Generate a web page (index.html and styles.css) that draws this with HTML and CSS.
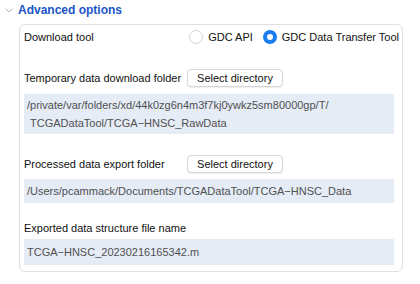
FILE: index.html
```html
<!DOCTYPE html>
<html lang="en">
<head>
    <meta charset="UTF-8" />
    <title>Advanced options</title>
    <link rel="stylesheet" href="styles.css">
</head>
<body>
    <div class="section-head">
        <svg class="chevron" width="8" height="5" viewBox="0 0 8 5">
            <path d="M0.5 0.5 L4 4 L7.5 0.5" fill="none" stroke="#b5b5b5" stroke-width="1" />
        </svg>
        <span class="section-title">Advanced options</span>
    </div>

    <div class="panel">
        <div class="row tool-row">
            <span>Download tool</span>
            <div class="radios">
                <label class="radio"><span class="dot"></span>GDC API</label>
                <label class="radio"><span class="dot checked"></span>GDC Data Transfer Tool</label>
            </div>
        </div>

        <div class="row first">
            <span class="label">Temporary data download folder</span>
            <button class="pick">Select directory</button>
        </div>
        <div class="path two-line">/private/var/folders/xd/44k0zg6n4m3f7kj0ywkz5sm80000gp/T/<br>&nbsp;TCGADataTool/TCGA&minus;HNSC_RawData</div>

        <div class="row">
            <span class="label">Processed data export folder</span>
            <button class="pick">Select directory</button>
        </div>
        <div class="path">/Users/pcammack/Documents/TCGADataTool/TCGA&minus;HNSC_Data</div>

        <div class="row short">
            <span>Exported data structure file name</span>
        </div>
        <div class="path tall">TCGA&minus;HNSC_20230216165342.m</div>
    </div>
</body>
</html>
```

FILE: styles.css
```css
body {
    margin: 0;
    font-family: 'Liberation Sans', Arial, sans-serif;
    font-size: 11px;
    color: #111;
    background: #fff;
}
.section-head {
    display: flex;
    align-items: center;
    height: 20px;
    padding-left: 5px;
    margin-bottom: 4px;
}
.chevron {
    margin-right: 5px;
}
.section-title {
    font-size: 12px;
    font-weight: bold;
    color: #1a56c8;
}
.panel {
    margin-left: 19px;
    width: 370px;
    border: 1px solid #e0e0e0;
    border-radius: 6px;
    padding: 1px 8px 6px 4px;
}
.row {
    display: flex;
    align-items: center;
    height: 20px;
    margin-top: 20px;
}
.row.first {
    margin-top: 20px;
}
.row.short {
    margin-top: 17px;
    height: 16px;
}
.tool-row {
    justify-content: space-between;
    height: 22px;
    margin-top: 0;
    margin-right: -5px;
}
.radios {
    display: flex;
    gap: 10px;
}
.radio {
    display: flex;
    align-items: center;
    gap: 5px;
}
.dot {
    width: 14px;
    height: 14px;
    border-radius: 50%;
    border: 1px solid #d2d2d2;
    background: #fff;
    box-sizing: border-box;
}
.dot.checked {
    border: 4px solid #1b7cf0;
}
.label {
    width: 163px;
}
.pick {
    font-family: inherit;
    font-size: 11px;
    color: #111;
    background: #fff;
    border: 1px solid #d6d6d6;
    border-radius: 4px;
    width: 96px;
    height: 18px;
    padding: 0;
    box-shadow: 0 1px 1px rgba(0, 0, 0, 0.07);
}
.path {
    margin-top: 5px;
    background: #e5ecf6;
    color: #505050;
    padding: 3px 3px;
    line-height: 18px;
}
.path.two-line {
    margin-top: 6px;
    padding: 2px 3px;
}
.path.tall {
    margin-top: 3px;
    padding: 4px 3px;
}
```
